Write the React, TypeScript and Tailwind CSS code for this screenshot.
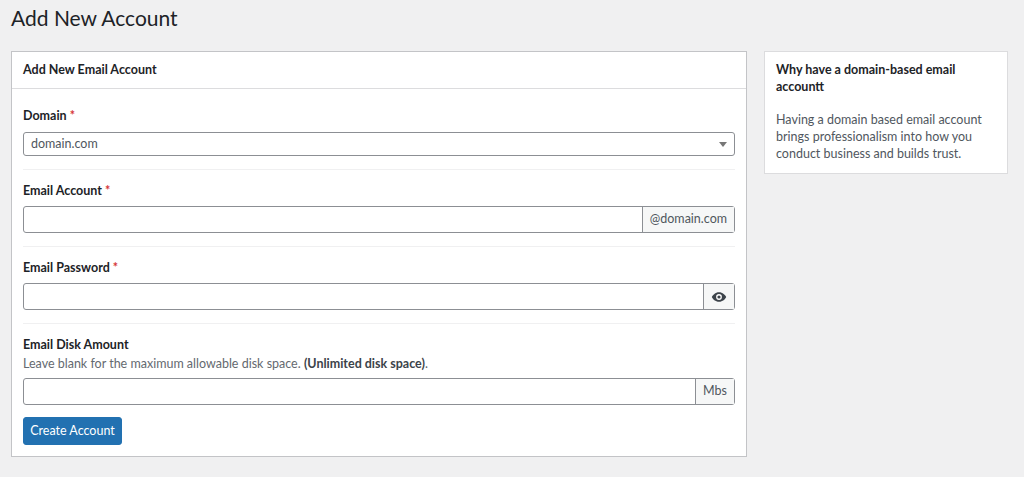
import React from "react";

const font = { fontFamily: 'Lato, "Noto Sans", sans-serif' };

function Label({ children, req }: { children: React.ReactNode; req?: boolean }) {
  return (
    <div className="text-[12.5px] font-bold text-[#1d2327] leading-[16px]">
      {children}
      {req && <span className="text-[#d63638]"> *</span>}
    </div>
  );
}

export default function App() {
  return (
    <div className="min-h-[477px] bg-[#f0f0f1] text-[#3c434a]" style={font}>
      <h1 className="pl-[11px] pt-[5px] text-[21px] leading-[26px] text-[#1d2327]">Add New Account</h1>
      <div className="flex items-start gap-[17px] pl-[11px] mt-[20px]">
        <div className="w-[736px] bg-white border border-[#c3c4c7]">
          <div className="h-[37px] border-b border-[#dcdcde] px-[11px] flex items-center text-[12.5px] font-bold text-[#1d2327]">
            Add New Email Account
          </div>
          <div className="px-[11px] pt-[19px] pb-[11px] text-[12.5px]">
            <Label req>Domain</Label>
            <div className="mt-[8px] h-[24px] border border-[#8c8f94] rounded-[3px] flex items-center justify-between px-[7px] text-[#50575e]">
              <span>domain.com</span>
              <span className="w-0 h-0 border-l-[4px] border-r-[4px] border-t-[5px] border-l-transparent border-r-transparent border-t-[#777]"></span>
            </div>
            <div className="border-b border-[#f0f0f1] mt-[13px] mb-[13px]"></div>
            <Label req>Email Account</Label>
            <div className="mt-[7px] h-[27px] border border-[#8c8f94] rounded-[3px] flex">
              <div className="flex-1"></div>
              <div className="border-l border-[#8c8f94] bg-[#f6f7f7] px-[7px] flex items-center text-[#50575e]">@domain.com</div>
            </div>
            <div className="border-b border-[#f0f0f1] mt-[13px] mb-[13px]"></div>
            <Label req>Email Password</Label>
            <div className="mt-[7px] h-[27px] border border-[#8c8f94] rounded-[3px] flex">
              <div className="flex-1"></div>
              <div className="border-l border-[#8c8f94] bg-[#f6f7f7] w-[31px] flex items-center justify-center">
                <svg width="16" height="12" viewBox="0 0 20 14">
                  <path d="M10 1C5.5 1 2 4.5 1 7c1 2.5 4.5 6 9 6s8-3.5 9-6c-1-2.5-4.5-6-9-6z" fill="#3c434a" />
                  <circle cx="10" cy="7" r="3.6" fill="#fff" />
                  <circle cx="10" cy="7" r="2" fill="#3c434a" />
                </svg>
              </div>
            </div>
            <div className="border-b border-[#f0f0f1] mt-[13px] mb-[13px]"></div>
            <Label>Email Disk Amount</Label>
            <div className="mt-[3px] text-[#646970] leading-[16px]">
              Leave blank for the maximum allowable disk space. <b className="text-[#3c434a]">(Unlimited disk space)</b>.
            </div>
            <div className="mt-[6px] h-[27px] border border-[#8c8f94] rounded-[3px] flex">
              <div className="flex-1"></div>
              <div className="border-l border-[#8c8f94] bg-[#f6f7f7] px-[7px] flex items-center text-[#50575e]">Mbs</div>
            </div>
            <button className="mt-[12px] h-[28px] w-[99px] bg-[#2271b1] border border-[#2271b1] rounded-[3px] text-white text-[12.5px]">
              Create Account
            </button>
          </div>
        </div>
        <div className="w-[244px] bg-white border border-[#dcdcde] px-[11px] pt-[9px] pb-[11px]">
          <div className="text-[12.5px] font-bold text-[#1d2327] leading-[17px]">Why have a domain-based email accountt</div>
          <p className="mt-[16px] text-[12.5px] leading-[17px] text-[#50575e]">
            Having a domain based email account brings professionalism into how you conduct business and builds trust.
          </p>
        </div>
      </div>
    </div>
  );
}
